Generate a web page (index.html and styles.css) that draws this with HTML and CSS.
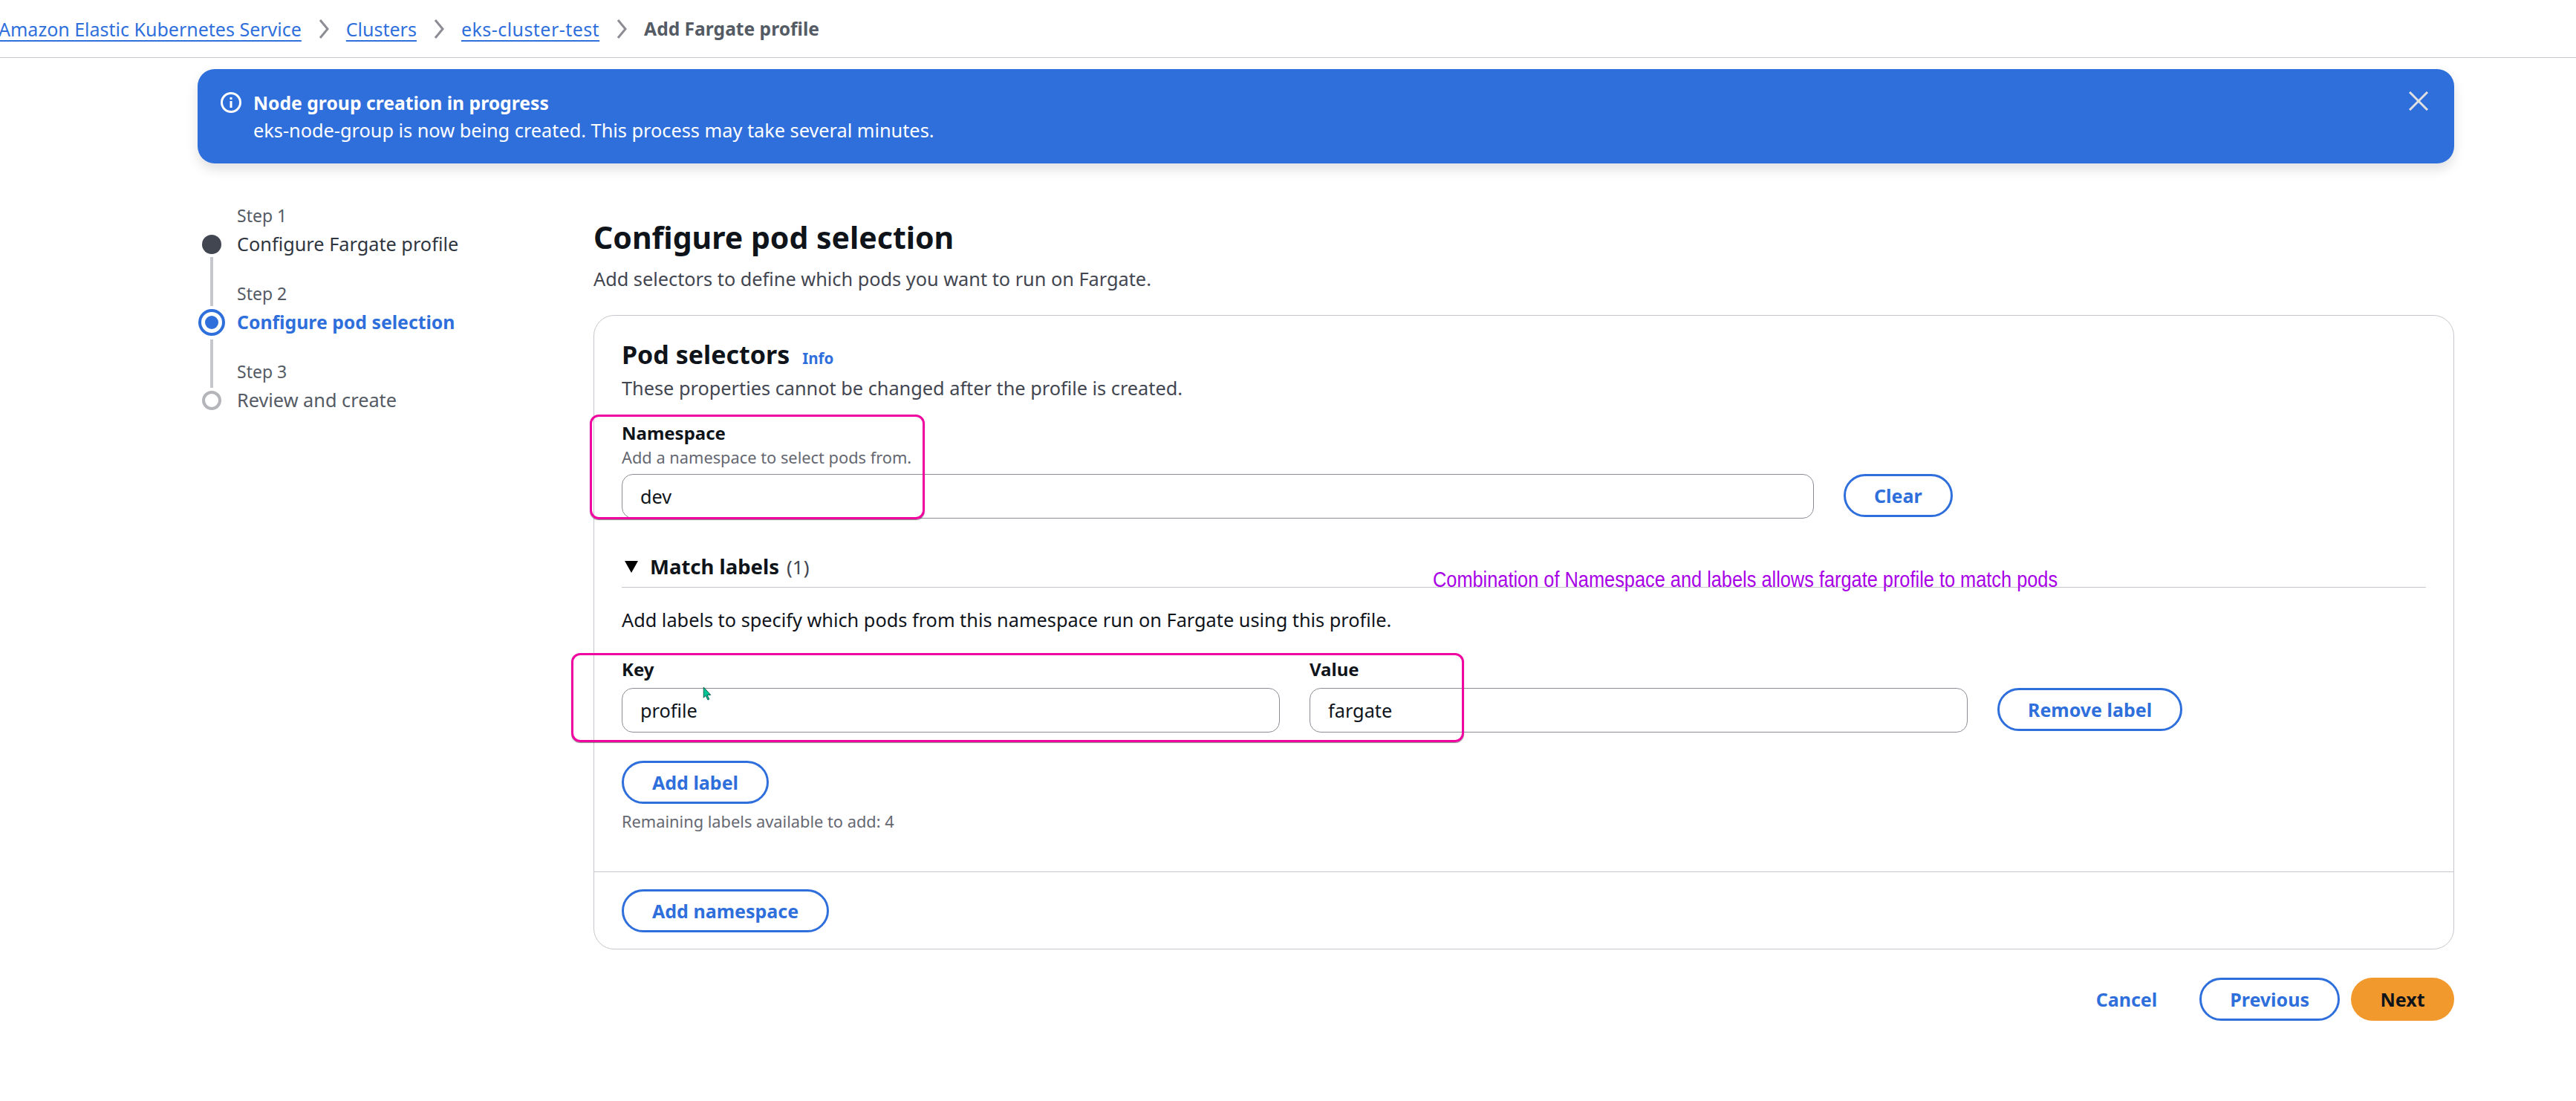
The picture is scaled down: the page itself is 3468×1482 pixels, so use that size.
FILE: index.html
```html
<!DOCTYPE html>
<html lang="en">
<head>
<meta charset="UTF-8">
<title>Add Fargate profile</title>
<link rel="stylesheet" href="styles.css">
</head>
<body>

<nav class="crumbs">
	<a href="#">Amazon Elastic Kubernetes Service</a>
	<svg class="chevron" viewBox="0 0 16 26"><path d="M3 1l10 12L3 25"/></svg>
	<a href="#">Clusters</a>
	<svg class="chevron" viewBox="0 0 16 26"><path d="M3 1l10 12L3 25"/></svg>
	<a class="crumb-cluster" href="#">eks-cluster-test</a>
	<svg class="chevron" viewBox="0 0 16 26"><path d="M3 1l10 12L3 25"/></svg>
	<span class="crumb-current">Add Fargate profile</span>
</nav>

<div class="page">
	<div class="banner">
		<svg class="banner-icon" viewBox="0 0 30 30">
			<circle cx="15" cy="15" r="12.5"/>
			<path d="M15 13v9M15 8v3"/>
		</svg>
		<div class="banner-text">
			<div class="banner-title">Node group creation in progress</div>
			<div>eks-node-group is now being created. This process may take several minutes.</div>
		</div>
		<svg class="banner-close" viewBox="0 0 26 26"><path d="M1 1l24 24M25 1L1 25"/></svg>
	</div>

	<div class="wizard">
		<ol class="steps">
			<li class="step">
				<span></span>
				<span class="step-num">Step 1</span>
				<span class="marker"><i class="dot-done"></i></span>
				<span class="step-title">Configure Fargate profile</span>
			</li>
			<li class="step">
				<span class="line"></span>
				<span class="step-num">Step 2</span>
				<span class="marker"><i class="dot-active"></i></span>
				<span class="step-title step-title-active">Configure pod selection</span>
			</li>
			<li class="step">
				<span class="line line-after-active"></span>
				<span class="step-num">Step 3</span>
				<span class="marker"><i class="dot-todo"></i></span>
				<span class="step-title step-title-todo">Review and create</span>
			</li>
		</ol>

		<main class="content">
			<h1>Configure pod selection</h1>
			<p class="sub">Add selectors to define which pods you want to run on Fargate.</p>

			<section class="card">
				<div class="card-body">
					<h2>Pod selectors<a class="info" href="#">Info</a></h2>
					<p class="card-desc">These properties cannot be changed after the profile is created.</p>

					<label class="field-label field-label-ns">Namespace</label>
					<div class="hint">Add a namespace to select pods from.</div>
					<div class="ns-row">
						<input class="input" value="dev">
						<button class="btn">Clear</button>
					</div>

					<div class="match-head">
						<svg class="caret" viewBox="0 0 18 16"><path d="M0 0h18L9 16z"/></svg>
						<strong>Match labels</strong><span class="count">(1)</span>
					</div>
					<p class="match-desc">Add labels to specify which pods from this namespace run on Fargate using this profile.</p>

					<div class="label-row">
						<label class="field-label">Key</label>
						<label class="field-label">Value</label>
						<span></span>
						<input class="input" value="profile">
						<input class="input" value="fargate">
						<button class="btn">Remove label</button>
					</div>

					<button class="btn btn-add">Add label</button>
					<div class="hint hint-remaining">Remaining labels available to add: 4</div>
				</div>
				<div class="card-foot">
					<button class="btn">Add namespace</button>
				</div>
			</section>

			<div class="actions">
				<a class="cancel" href="#">Cancel</a>
				<button class="btn">Previous</button>
				<button class="btn btn-primary">Next</button>
			</div>
		</main>
	</div>
</div>

<!-- things drawn over the screenshot -->
<div class="mark mark-ns"></div>
<div class="mark mark-labels"></div>
<div class="note">Combination of Namespace and labels allows fargate profile to match pods</div>
<svg class="cursor" viewBox="0 0 12 20"><path d="M1 1v15l3-3 3 6 2-1-3-6h5z"/></svg>

</body>
</html>
```

FILE: styles.css
```css
html, body {
	margin: 0;
	padding: 0;
	background: #fff;
	color: #0f141a;
	font-family: "Noto Sans", sans-serif;
	font-size: 25.3px;
}

a {
	color: #2f6fdc;
}

/* breadcrumbs */
.crumbs {
	display: flex;
	align-items: center;
	gap: 22px;
	height: 77px;
	border-bottom: 1px solid #c6c6cd;
	margin-left: -2px;
	overflow: hidden;
	font-size: 25px;
}
.crumbs a {
	text-underline-offset: 5px;
	text-decoration-thickness: 2px;
}
.crumbs .crumb-cluster {
	letter-spacing: 0.45px;
}
.chevron {
	width: 16px;
	height: 26px;
	fill: none;
	stroke: #8c8c94;
	stroke-width: 3;
}
.crumb-current {
	color: #545b64;
	font-size: 24.6px;
	font-weight: 700;
}

.page {
	padding: 15px 164px 0 266px;
}

/* flash banner */
.banner {
	display: flex;
	align-items: flex-start;
	height: 127px;
	box-sizing: border-box;
	padding: 27px 35px 0 30px;
	border-radius: 23px;
	background: #2f6fdc;
	color: #fff;
	box-shadow: 0 8px 16px rgba(0, 7, 22, 0.12);
	line-height: 37px;
}
.banner-icon {
	width: 30px;
	height: 30px;
	margin: 3px 15px 0 0;
	fill: none;
	stroke: #fff;
	stroke-width: 3;
}
.banner-text {
	flex: 1;
}
.banner-title {
	font-size: 24.7px;
	font-weight: 700;
}
.banner-close {
	width: 26px;
	height: 26px;
	margin-top: 3px;
	fill: none;
	stroke: #e0e0e0;
	stroke-width: 3;
}

.wizard {
	display: flex;
	margin-top: 23px;
}

/* left step list */
.steps {
	flex: none;
	width: 533px;
	margin: 0;
	padding: 0;
	list-style: none;
}
.step {
	display: grid;
	grid-template-columns: 38px 1fr;
	grid-template-rows: 67px 38px;
	column-gap: 15px;
	line-height: 36px;
}
.step-num {
	align-self: end;
	padding-bottom: 2px;
	color: #545b64;
	font-size: 23px;
}
.step-title {
	color: #303640;
}
.step-title-active {
	color: #2f6fdc;
	font-size: 24.8px;
	font-weight: 700;
}
.step-title-todo {
	color: #545b64;
}
.marker {
	display: flex;
	align-items: center;
	justify-content: center;
}
.line {
	justify-self: center;
	width: 4px;
	height: 66px;
	margin-top: -2px;
	background: #c6c6cd;
}
.line-after-active {
	height: 65px;
	margin-top: 4px;
}
.dot-done {
	width: 26px;
	height: 26px;
	border-radius: 50%;
	background: #424650;
}
.dot-active {
	width: 18px;
	height: 18px;
	padding: 5px;
	border: 4px solid #2f6fdc;
	border-radius: 50%;
	background: #2f6fdc content-box;
}
.dot-todo {
	width: 18px;
	height: 18px;
	border: 4px solid #b4b4bb;
	border-radius: 50%;
}

/* main column */
.content {
	flex: 1;
	padding-top: 48px;
}
h1 {
	margin: 0;
	font-size: 41px;
	line-height: 56px;
	font-weight: 700;
}
.sub {
	margin: 9px 0 0;
	line-height: 38px;
	color: #424650;
}
.card {
	margin-top: 30px;
	border: 1px solid #c6c6cd;
	border-radius: 28px;
}
.card-body {
	padding: 27px 37px 51px;
}
h2 {
	display: flex;
	align-items: baseline;
	gap: 17px;
	height: 50px;
	margin: 0;
	font-size: 34px;
	line-height: 50px;
	font-weight: 700;
}
.info {
	font-size: 20.5px;
	font-weight: 700;
	text-decoration: none;
}
.card-desc {
	margin: 1px 0 0;
	line-height: 38px;
	color: #424650;
}
.field-label {
	display: block;
	font-size: 24px;
	font-weight: 700;
	line-height: 34px;
}
.field-label-ns {
	margin-top: 25px;
}
.hint {
	font-size: 21.8px;
	line-height: 32px;
	color: #656871;
}
.ns-row {
	display: flex;
	gap: 40px;
	margin-top: 6px;
}
.input {
	box-sizing: border-box;
	height: 60px;
	width: 100%;
	min-width: 0;
	padding: 0 24px;
	border: 1px solid #8c8c94;
	border-radius: 15px;
	color: #0f141a;
	background: #fff;
	font: inherit;
}
.ns-row .input {
	width: 1605px;
}
.btn {
	box-sizing: border-box;
	height: 58px;
	padding: 0 38px;
	border: 3px solid #2f6fdc;
	border-radius: 30px;
	background: #fff;
	color: #2f6fdc;
	font: 700 25px "Noto Sans", sans-serif;
}
.btn-add {
	display: block;
	margin-top: 38px;
}
.btn-primary {
	width: 139px;
	padding: 0;
	border: 0;
	background: #f2992e;
	color: #0f141a;
}
.hint-remaining {
	margin-top: 8px;
}

.match-head {
	display: flex;
	align-items: center;
	gap: 10px;
	height: 40px;
	margin-top: 45px;
	padding-bottom: 7px;
	border-bottom: 1px solid #c6c6cd;
	line-height: 40px;
	font-size: 27.5px;
}
.caret {
	width: 18px;
	height: 16px;
	margin: 0 6px 0 4px;
}
.count {
	color: #424650;
	font-size: 26px;
}
.match-desc {
	margin: 24px 0 0;
	line-height: 38px;
}
.label-row {
	display: grid;
	grid-template-columns: 886px 886px auto;
	grid-template-rows: 34px 60px;
	column-gap: 40px;
	row-gap: 8px;
	justify-content: start;
	margin-top: 31px;
}

.card-foot {
	display: flex;
	padding: 23px 37px 22px;
	border-top: 1px solid #c6c6cd;
}

.actions {
	display: flex;
	align-items: center;
	justify-content: flex-end;
	gap: 15px;
	margin-top: 38px;
}
.cancel {
	margin-right: 42px;
	font-size: 25px;
	font-weight: 700;
	text-decoration: none;
}

/* annotation layer */
.mark {
	position: absolute;
	box-sizing: border-box;
	border: 3px solid #f0049f;
	border-radius: 12px;
	box-shadow: 0 1px 1px rgba(0, 0, 0, 0.5);
}
.mark-ns {
	left: 794px;
	top: 558px;
	width: 451px;
	height: 141px;
}
.mark-labels {
	left: 769px;
	top: 879px;
	width: 1202px;
	height: 120px;
}
.note {
	position: absolute;
	left: 1929px;
	top: 762px;
	color: #a800e6;
	font: 29px/36px "Liberation Sans", sans-serif;
	white-space: nowrap;
	transform: scaleX(0.874);
	transform-origin: left center;
}
.cursor {
	position: absolute;
	left: 946px;
	top: 924px;
	width: 12px;
	height: 19px;
	fill: #00c596;
	stroke: #0b5c4a;
	stroke-width: 1;
}
```
